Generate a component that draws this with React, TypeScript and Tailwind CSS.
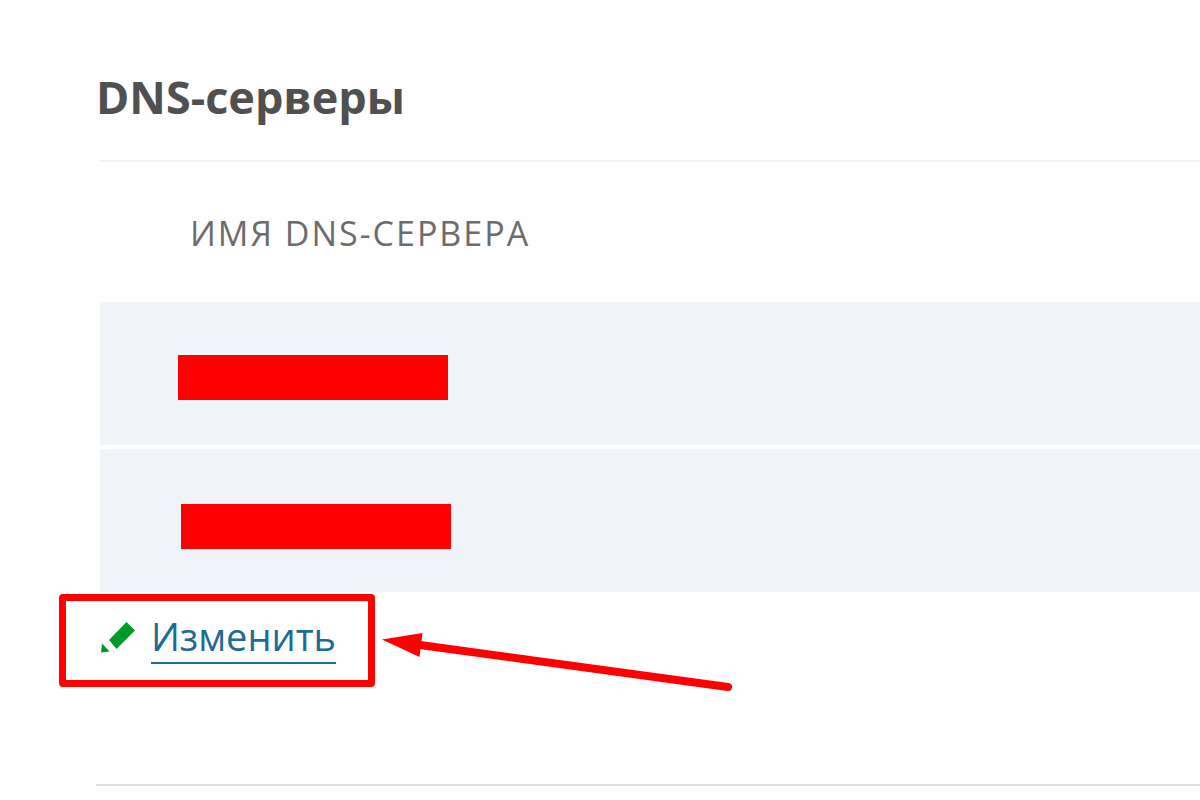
const servers = [
  { id: "ns1", cell: "h-[143px] pt-2 pl-[78px]" },
  { id: "ns2", cell: "h-[147px] border-t-4 border-white pt-3 pl-[81px]" },
];

function PencilIcon() {
  return (
    <svg viewBox="0 0 35 36" className="h-9 w-[35px] shrink-0 fill-[#009a2b]" aria-hidden="true">
      <path d="M26.5 0 35 8.5 16.5 27 9 18Z" />
      <path d="M2 21.5 9.5 29.5 1 30.5Z" />
    </svg>
  );
}

function Arrow() {
  return (
    <svg
      viewBox="0 0 352 64"
      className="pointer-events-none absolute top-[35px] left-[282px] h-16 w-[352px]"
      aria-hidden="true"
    >
      <path d="M38 18 346 60" fill="none" stroke="#ff0000" strokeWidth="8" strokeLinecap="round" />
      <path d="M0 12.5 40.5 6 37.5 30Z" fill="#ff0000" />
    </svg>
  );
}

export default function App() {
  return (
    <main className="overflow-hidden bg-[#fefefe] pt-[65px] pb-3.5 pl-24 font-['Open_Sans','Noto_Sans',sans-serif]">
      <section className="pl-1">
        <h1 className="-ml-1 pb-[31px] text-[45px] leading-16 font-bold text-[#505050]">DNS-серверы</h1>

        <table className="w-full border-separate border-spacing-0 text-left">
          <thead>
            <tr>
              <th
                scope="col"
                className="h-[142px] border-t-2 border-[#f1f1f1] pt-0.5 pl-[90px] text-[34px] leading-12 font-normal tracking-[2px] text-[#6c6c6c] uppercase"
              >
                Имя DNS-сервера
              </th>
            </tr>
          </thead>
          <tbody>
            {servers.map((server) => (
              <tr key={server.id}>
                <td className={`bg-[#f0f4f9] ${server.cell}`}>
                  <div className="h-[45px] w-[270px] bg-[#ff0000]" />
                </td>
              </tr>
            ))}
          </tbody>
        </table>

        <div className="relative pt-6">
          <a href="#edit" className="inline-flex items-center gap-4 text-[38px] leading-10 text-[#1d6c92]">
            <PencilIcon />
            <span className="border-b-2 border-[#1d6c92] pb-1.5">Изменить</span>
          </a>
          <div className="pointer-events-none absolute top-0.5 -left-[41px] h-[93px] w-[316px] rounded-sm border-[7px] border-[#ff0000]" />
          <Arrow />
        </div>
      </section>

      <hr className="mt-[120px] border-t-2 border-[#dedede]" />
    </main>
  );
}
